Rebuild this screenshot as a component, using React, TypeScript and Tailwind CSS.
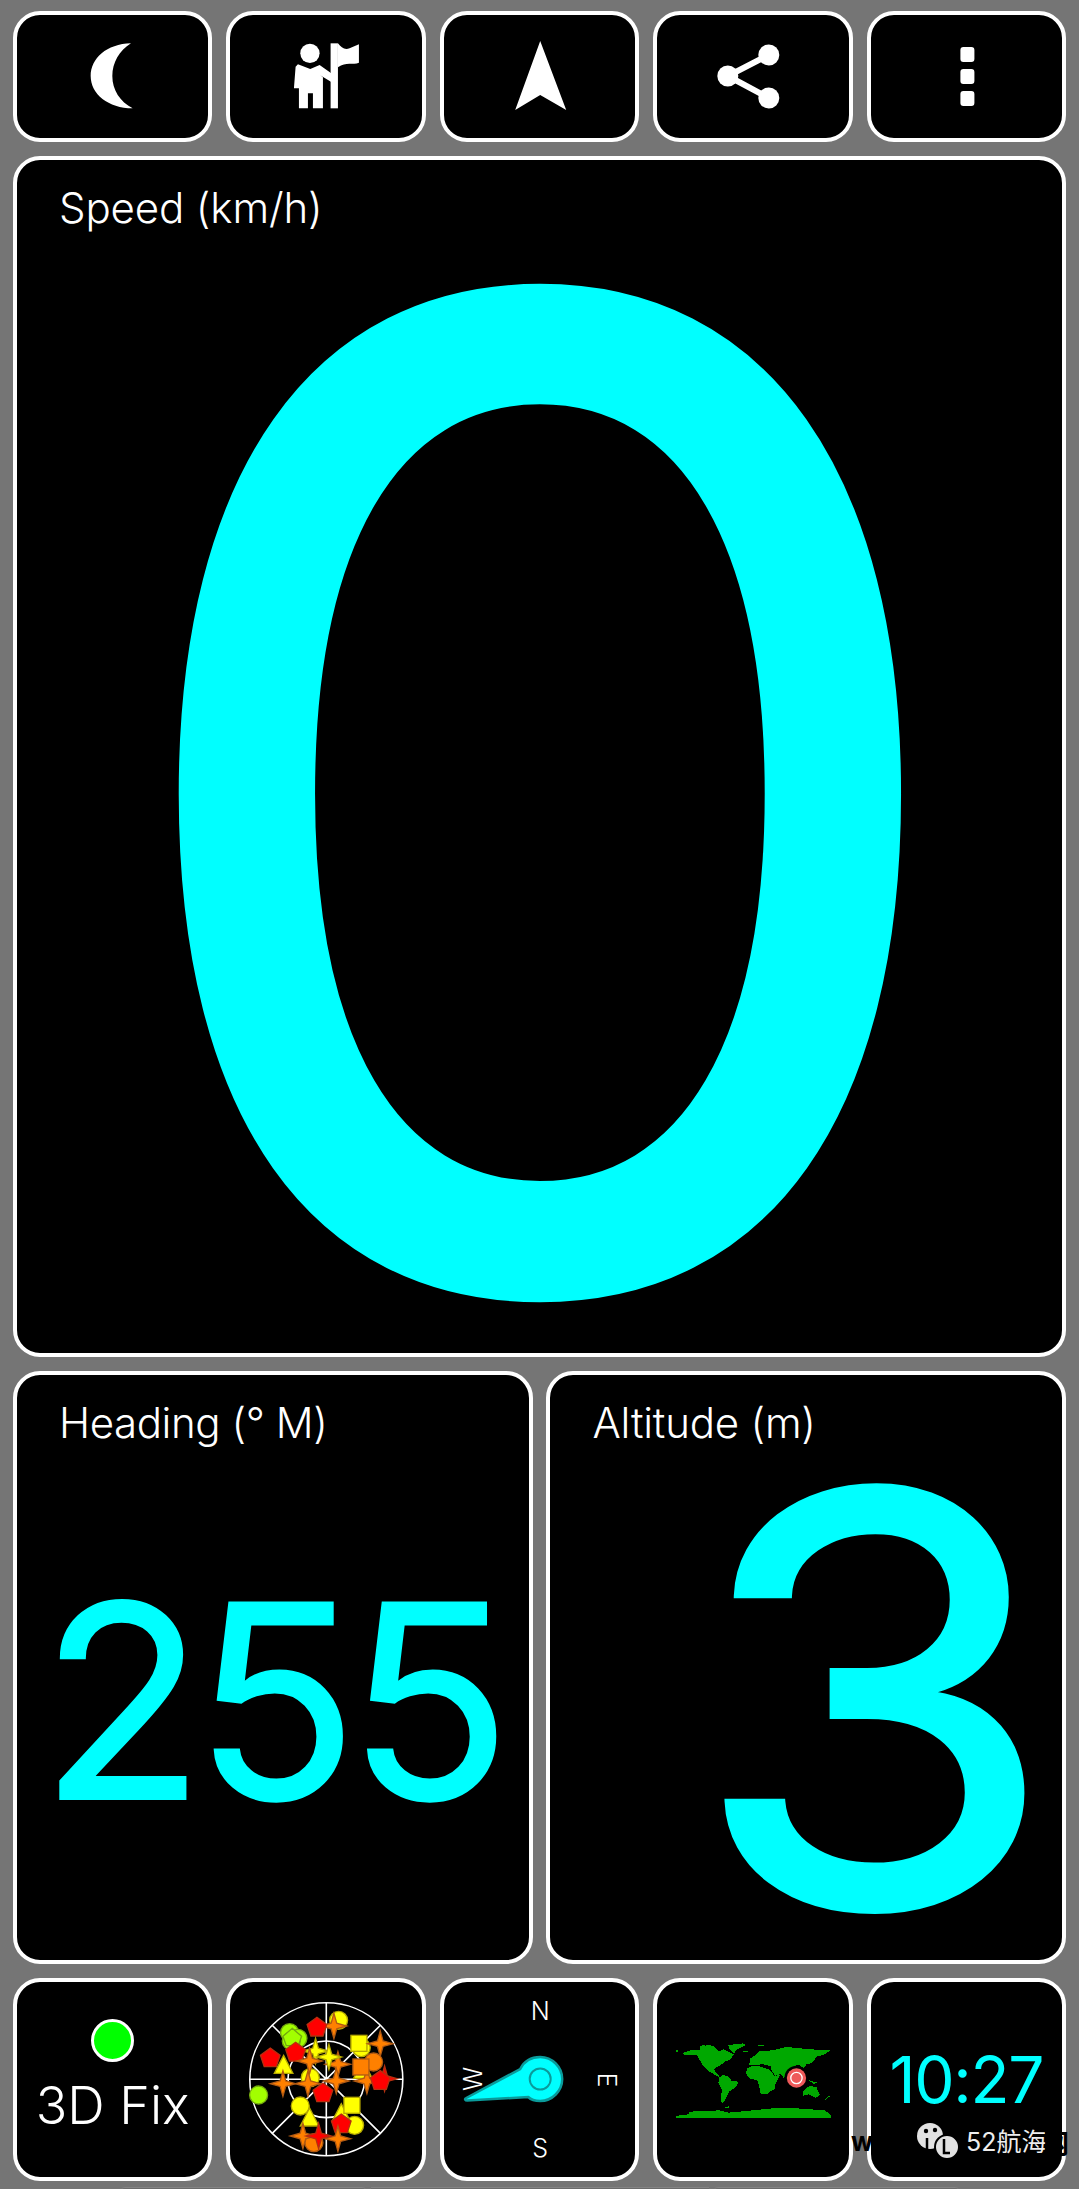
import React from 'react'

const CYAN = 'text-[#00ffff]'

const Card: React.FC<{ className?: string; children?: React.ReactNode }> = ({ className = '', children }) => (
  <div className={`rounded-[27px] border-4 border-white bg-black overflow-hidden ${className}`}>{children}</div>
)

const star = (x: number, y: number, r: number) => {
  const s = r * 0.22
  return `${x},${y - r} ${x + s},${y - s} ${x + r},${y} ${x + s},${y + s} ${x},${y + r} ${x - s},${y + s} ${x - r},${y} ${x - s},${y - s}`
}

const pentagon = (x: number, y: number, r: number) =>
  [0, 1, 2, 3, 4]
    .map((i) => {
      const a = (Math.PI * 2 * i) / 5 - Math.PI / 2
      return `${x + r * Math.cos(a)},${y + r * Math.sin(a)}`
    })
    .join(' ')

const COLORS = {
  y: { fill: '#ffff00', stroke: '#b5a800' },
  o: { fill: '#ff8000', stroke: '#b25a12' },
  r: { fill: '#ff0000', stroke: '#b5300f' },
  g: { fill: '#a2ff00', stroke: '#74a80e' },
}

type Sat = [string, keyof typeof COLORS, number, number]

// drawn back to front, coordinates are 3x
const SATS: Sat[] = [
  ['c', 'y', 327, 103],
  ['s', 'o', 313, 120],
  ['p', 'r', 262, 125],
  ['c', 'g', 180, 140],
  ['c', 'g', 205, 157],
  ['c', 'g', 185, 165],
  ['d', 'g', 188, 155],
  ['c', 'y', 395, 185],
  ['q', 'y', 388, 172],
  ['s', 'o', 452, 173],
  ['c', 'o', 432, 228],
  ['p', 'r', 122, 217],
  ['c', 'y', 242, 275],
  ['s', 'y', 258, 195],
  ['p', 'r', 198, 200],
  ['t', 'y', 162, 240],
  ['s', 'o', 240, 225],
  ['s', 'o', 325, 235],
  ['s', 'y', 298, 213],
  ['t', 'y', 400, 255],
  ['s', 'o', 412, 285],
  ['q', 'o', 394, 243],
  ['s', 'r', 465, 278],
  ['p', 'r', 452, 285],
  ['s', 'o', 160, 293],
  ['s', 'o', 235, 293],
  ['s', 'o', 320, 285],
  ['c', 'g', 87, 327],
  ['p', 'r', 280, 322],
  ['c', 'y', 212, 360],
  ['t', 'y', 335, 385],
  ['q', 'y', 367, 358],
  ['c', 'y', 375, 418],
  ['p', 'r', 335, 415],
  ['t', 'y', 240, 398],
  ['c', 'o', 253, 470],
  ['s', 'o', 220, 450],
  ['s', 'o', 325, 458],
  ['s', 'r', 267, 450],
]

const SatShape: React.FC<{ sat: Sat }> = ({ sat }) => {
  const [kind, color, x, y] = sat
  const c = { ...COLORS[color], strokeWidth: 4 }
  if (kind === 'c') return <circle cx={x} cy={y} r={27} {...c} />
  if (kind === 'q') return <rect x={x - 24} y={y - 24} width={48} height={48} {...c} />
  if (kind === 'p') return <polygon points={pentagon(x, y, 31)} {...c} />
  if (kind === 'd') return <polygon points={`${x},${y - 28} ${x + 28},${y - 4} ${x + 18},${y + 24} ${x - 18},${y + 24} ${x - 28},${y - 4}`} {...c} />
  if (kind === 't') return <polygon points={`${x},${y - 32} ${x + 28},${y + 22} ${x - 28},${y + 22}`} {...c} />
  return <polygon points={star(x, y, 38)} {...c} />
}

const LAND = [
  '48,56 56,56 56,64 48,64',
  '70,65 100,56 120,56 122,46 150,42 165,48 175,60 185,58 192,55 205,62 222,70 212,85 196,92 186,100 172,108 162,116 178,134 176,138 160,128 146,120 130,104 120,88 112,72 95,72 72,72',
  '205,42 250,37 258,42 232,55 222,68 210,55',
  '178,140 190,132 205,136 216,150 236,152 228,168 208,182 198,204 190,216 183,212 186,175 176,155',
  '262,112 280,104 300,106 330,116 345,136 362,130 348,158 336,178 322,190 303,190 298,165 292,148 270,142 258,128',
  '268,102 272,82 290,70 300,60 340,58 380,48 420,52 470,56 513,58 490,72 472,76 456,96 440,100 432,112 415,100 392,112 380,126 372,142 362,126 345,104 336,106 312,100',
  '332,104 360,104 374,126 346,134 334,116',
  '338,165 345,162 345,175 336,178',
  '428,182 448,165 470,168 480,192 468,200 448,190 430,194',
  '448,148 472,155 462,160',
  '495,205 508,192 510,196 498,207',
  '48,255 85,250 90,242 180,238 205,245 260,240 340,232 410,232 495,238 513,252 513,262 48,262',
  '295,42 312,42 312,45 295,45',
  '250,60 265,60 265,63 250,63',
  '120,45 135,42 135,50 120,50',
  '195,228 208,226 205,232 195,232',
]

const TopIcon: React.FC<{ box: string; children: React.ReactNode }> = ({ box, children }) => (
  <Card className="flex-1 h-full">
    <svg viewBox={box} className="w-full h-full block" fill="#fff">
      {children}
    </svg>
  </Card>
)

export default function App() {
  return (
    <div className="relative w-[1079px] h-[2189px] bg-[#757575] overflow-hidden pt-[11px] px-[13px] flex flex-col gap-[14px] font-['Inter',sans-serif] font-light text-white">
      <div className="flex shrink-0 gap-[14px] h-[131px]">
        <TopIcon box="17 15 191.4 123">
          <g transform="translate(60 20) scale(0.3333)">
            <path d="M213 70C140 72 92 115 92 168C92 222 145 265 218 265C180 245 157 210 157 168C157 128 178 92 213 70Z" />
          </g>
        </TopIcon>
        <TopIcon box="230.4 15 191.4 123">
          <g transform="translate(270 20) scale(0.3333)">
            <circle cx="121" cy="100" r="29" />
            <path d="M85 133L122 147L150 135L185 160V186L152 166L160 172V265H130V220H115V265H88V205H73L78 140Z" />
            <rect x="183" y="70" width="22" height="195" />
            <path d="M205 70C215 82 225 92 240 85L268 73V128C250 136 230 124 205 142Z" />
          </g>
        </TopIcon>
        <TopIcon box="443.8 15 191.4 123">
          <polygon points="540,41 566,110 540,95 515,110" />
        </TopIcon>
        <TopIcon box="657.2 15 191.4 123">
          <circle cx="769" cy="55" r="10.5" />
          <circle cx="728" cy="76" r="10.5" />
          <circle cx="769" cy="98" r="10.5" />
          <path d="M769 55L728 76L769 98" fill="none" stroke="#fff" strokeWidth="6" />
        </TopIcon>
        <TopIcon box="870.6 15 191.4 123">
          <rect x="960" y="47" width="14" height="15" rx="3" />
          <rect x="960" y="69" width="14" height="15" rx="3" />
          <rect x="960" y="91" width="14" height="15" rx="3" />
        </TopIcon>
      </div>

      <Card className="h-[1201px] shrink-0 relative flex flex-col pl-[42px] pt-[23px]">
        <div className="text-[42px] leading-[50px] tracking-[-0.003em]">Speed (km/h)</div>
        <div className={`absolute inset-0 flex items-center justify-center pt-[74px] text-[1347px] leading-none font-normal [-webkit-text-stroke:12px_#00ffff] ${CYAN}`}>
          <span className="scale-x-[1.03]">0</span>
        </div>
      </Card>

      <div className="flex shrink-0 gap-[13px] h-[593px]">
        <Card className="flex-1 min-w-0 flex flex-col pl-[42px] pt-[23px]">
          <div className="text-[42px] leading-[50px] tracking-[-0.01em]">Heading (° M)</div>
          <div className={`flex-1 flex items-center -ml-[19px] pb-[6px] text-[270px] leading-none font-normal tracking-[-0.04em] [-webkit-text-stroke:2px_#00ffff] ${CYAN}`}>255</div>
        </Card>
        <Card className="flex-1 min-w-0 flex flex-col pl-[43px] pt-[23px]">
          <div className="text-[42px] leading-[50px] tracking-[-0.005em]">Altitude (m)</div>
          <div className={`flex-1 flex items-center justify-end pr-[12px] pb-[10px] text-[570px] leading-[400px] font-normal [-webkit-text-stroke:5px_#00ffff] ${CYAN}`}>
            <span className="scale-x-[1.04]">3</span>
          </div>
        </Card>
      </div>

      <div className="flex shrink-0 gap-[14px] h-[203px]">
        <Card className="flex-1 flex flex-col items-center justify-center gap-[14px] pb-[5px]">
          <div className="w-[43px] h-[43px] rounded-full border-[3px] border-white bg-[#00ff00]" />
          <div className="text-[52px] leading-[60px]">3D Fix</div>
        </Card>
        <Card className="flex-1">
          <svg viewBox="230.4 1981 191.4 195" className="w-full h-full block">
            <g fill="none" stroke="#fff" strokeWidth="1.6">
              <circle cx="326.7" cy="2078.3" r="76.5" />
              <circle cx="326.7" cy="2078.3" r="38.3" />
              <path d="M326.7 2001.8V2154.8M250.2 2078.3H403.2M272.6 2024.2L380.8 2132.4M380.8 2024.2L272.6 2132.4" />
            </g>
            <g transform="translate(230 1985) scale(0.3333)">
              {SATS.map((s, i) => (
                <SatShape key={i} sat={s} />
              ))}
            </g>
          </svg>
        </Card>
        <Card className="flex-1">
          <svg viewBox="443.8 1981 191.4 195" className="w-full h-full block font-['Inter',sans-serif] font-light">
            <g fill="#fff" fontSize="25" textAnchor="middle">
              <text x="540" y="2019">N</text>
              <text x="540" y="2156">S</text>
              <text transform="translate(607 2079) rotate(90)" y="9">E</text>
              <text transform="translate(473 2078) rotate(-90)" y="9">W</text>
            </g>
            <path
              d="M520 2068C525 2058 533 2056 540 2056C552 2056 562 2066 562 2078C562 2090 552 2100 540 2100C535 2100 531 2099 528 2096L467 2099.5C465 2099.5 464 2098 466 2097Z"
              fill="#00ffff"
              stroke="#0a9a9a"
              strokeWidth="2.5"
            />
            <circle cx="540" cy="2078" r="10.5" fill="#00ffff" stroke="#0a9a9a" strokeWidth="2" />
          </svg>
        </Card>
        <Card className="flex-1">
          <svg viewBox="657.2 1981 191.4 195" className="w-full h-full block">
            <g transform="translate(660 2030) scale(0.3333)">
              <g fill="#00a800" shapeRendering="crispEdges">
                {LAND.map((p, i) => (
                  <polygon key={i} points={p} />
                ))}
              </g>
              <circle cx="410" cy="140" r="36" fill="#000" />
              <circle cx="410" cy="141" r="29" fill="#ee5a5a" />
              <circle cx="410" cy="141" r="17" fill="none" stroke="#fff" strokeWidth="4" />
            </g>
          </svg>
        </Card>
        <Card className={`flex-1 flex items-center justify-center text-[64px] leading-none font-normal tracking-[-0.02em] ${CYAN}`}>10:27</Card>
      </div>

      {/* nav bar sliver */}
      <div className="flex shrink-0 justify-center gap-[5px] -mt-[8px]">
        <div className="w-[245px] h-[10px] rounded-t-[4px] bg-[#6c6c6c] border-t border-[#848484]" />
        <div className="w-[338px] h-[10px] bg-[#6c6c6c] border-t border-[#848484]" />
        <div className="w-[245px] h-[10px] rounded-t-[4px] bg-[#6c6c6c] border-t border-[#848484]" />
      </div>

      {/* watermark */}
      <div className="absolute left-[851px] top-[2127px] text-[26px] leading-[30px] font-bold text-black">ww</div>
      <svg viewBox="0 0 42 36" className="absolute left-[917px] top-[2122px] w-[42px] h-[36px]">
        <ellipse cx="13" cy="14" rx="13" ry="13" fill="#e2e2e2" />
        <circle cx="30" cy="25" r="12" fill="#e2e2e2" stroke="#000" strokeWidth="2" />
        <circle cx="9" cy="9" r="2.2" fill="#000" />
        <circle cx="18" cy="8" r="2.2" fill="#000" />
        <path d="M10 16V28M27 17V31H33" fill="none" stroke="#000" strokeWidth="2.5" />
      </svg>
      <div className="absolute left-[966px] top-[2127px] text-[25px] leading-[30px] font-normal text-[#eeeeee] font-['Inter','Noto_Sans_CJK_SC',sans-serif]">52航海</div>
      <div className="absolute left-[1043px] top-[2127px] text-[26px] leading-[30px] font-bold text-black font-['Noto_Sans_CJK_SC',sans-serif]">网</div>
    </div>
  )
}
